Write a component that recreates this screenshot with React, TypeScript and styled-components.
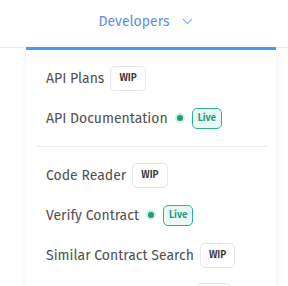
import React, { FC } from 'react'
import styled, { createGlobalStyle } from 'styled-components'

const GlobalStyle = createGlobalStyle`
  body {
    margin: 0;
    background: #fff;
    font-family: "Fira Sans", "Noto Sans", sans-serif;
  }
`

const Page = styled('div')`
  width: 288px;
  height: 286px;
  overflow: hidden;
`

const NavBar = styled('nav')`
  height: 47px;
  border-bottom: 1px solid #ececec;
  display: flex;
`

const NavItem = styled('div')`
  margin-left: 26px;
  width: 250px;
  height: 47px;
  display: flex;
  align-items: center;
  justify-content: center;
  gap: 13px;
  color: #5b8fdf;
  font-size: 14px;
  position: relative;
  padding: 0 10px 4px 0;
  box-sizing: border-box;
  &::after {
    content: '';
    position: absolute;
    left: 0;
    right: 0;
    bottom: -3px;
    height: 3px;
    background: #4a9be8;
  }
`

const Menu = styled('div')`
  margin-left: 26px;
  width: 250px;
  padding: 10px 0 8px;
  background: #fff;
  box-shadow: 0 2px 8px rgba(0, 0, 0, 0.06);
`

const Item = styled('div')`
  height: 40px;
  display: flex;
  align-items: center;
  padding-left: 20px;
  gap: 6px;
  font-size: 14px;
  color: #505050;
`

const Divider = styled('hr')`
  border: 0;
  border-top: 1px solid #ececec;
  margin: 8px 8px 8px 10px;
`

const Wip = styled('span')`
  height: 25px;
  padding: 0 8px;
  display: inline-flex;
  align-items: center;
  border: 1px solid #e6e6e6;
  border-radius: 5px;
  font-size: 10px;
  font-weight: 600;
  color: #3a3a3a;
  box-sizing: border-box;
`

const Live = styled('span')`
  height: 21px;
  padding: 0 5px;
  display: inline-flex;
  align-items: center;
  border: 1px solid #2bb195;
  background: #e9f8f4;
  border-radius: 5px;
  font-size: 10px;
  font-weight: 600;
  color: #1b9c80;
  box-sizing: border-box;
`

const Dot = styled('span')`
  width: 6px;
  height: 6px;
  border-radius: 50%;
  background: #1c9d7b;
  box-shadow: 0 0 0 2px rgba(28, 157, 123, 0.2);
  margin: 0 3px;
`

type Status = 'wip' | 'live'

const Entry: FC<{ label: string; status: Status }> = ({ label, status }) => (
  <Item>
    <span>{label}</span>
    {status === 'wip' ? (
      <Wip>WIP</Wip>
    ) : (
      <>
        <Dot />
        <Live>Live</Live>
      </>
    )}
  </Item>
)

const Chevron = () => (
  <svg width="11" height="7" viewBox="0 0 11 7" fill="none">
    <path d="M1 1l4.5 4.5L10 1" stroke="#8fb3ea" strokeWidth="1.2" />
  </svg>
)

const App: FC = () => (
  <Page>
    <GlobalStyle />
    <NavBar>
      <NavItem>
        <span>Developers</span>
        <Chevron />
      </NavItem>
    </NavBar>
    <Menu>
      <Entry label="API Plans" status="wip" />
      <Entry label="API Documentation" status="live" />
      <Divider />
      <Entry label="Code Reader" status="wip" />
      <Entry label="Verify Contract" status="live" />
      <Entry label="Similar Contract Search" status="wip" />
      <Entry label="Contract Audit Reports" status="wip" />
    </Menu>
  </Page>
)

export default App
